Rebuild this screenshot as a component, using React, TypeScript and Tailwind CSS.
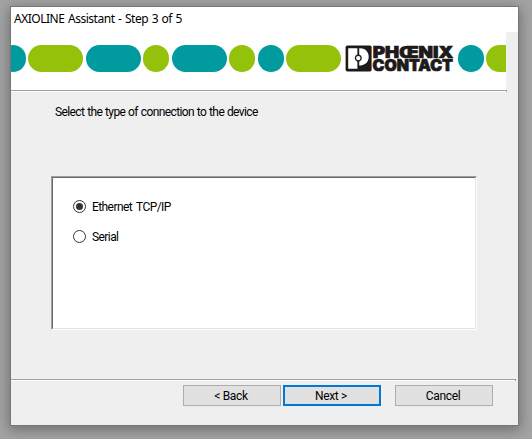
import type { ReactNode } from "react";

const body = "font-[Roboto,sans-serif] text-[12px] leading-[16px] text-black whitespace-nowrap";

function Pill({ wide = false, green = false }: { wide?: boolean; green?: boolean }) {
  return (
    <div
      className={`h-[26.4px] shrink-0 rounded-full ${wide ? "w-[55px]" : "w-[26.4px]"} ${
        green ? "bg-[#94c10a]" : "bg-[#009a9f]"
      }`}
    />
  );
}

function Logo() {
  return (
    <svg width="108" height="27" viewBox="0 0 108 27" className="ml-[1.8px] mr-[2px] shrink-0 overflow-visible">
      <rect x="0.6" y="0.5" width="26" height="26" rx="1.8" fill="#1d1a19" />
      <path d="M3.2 3.3H12.4V9.4A3.9 3.9 0 0 0 12.4 16.8V23.7H3.2Z" fill="#fff" />
      <path d="M14.2 3.3H15.2C26.6 3.3 26.6 20.4 15.2 20.4H14.2V16.8A3.9 3.9 0 0 0 14.2 9.4Z" fill="#fff" />
      <circle cx="13.3" cy="13.1" r="2.2" fill="#fff" />
      <g fill="#1d1a19" stroke="#1d1a19" strokeWidth="0.7" fontFamily="Inter, sans-serif" fontWeight="900" fontSize="15.4">
        <text x="27.8" y="12.5" textLength="80.4" lengthAdjust="spacingAndGlyphs">PHŒNIX</text>
        <text x="27.5" y="26.2" textLength="80.5" lengthAdjust="spacingAndGlyphs">CONTACT</text>
      </g>
    </svg>
  );
}

function Rule({ className }: { className: string }) {
  return <div className={`h-[2px] border-t border-r border-[#a0a0a0] bg-white ${className}`} />;
}

function Radio({ checked = false, label }: { checked?: boolean; label: string }) {
  return (
    <label className="flex h-[13px] items-center gap-[6px]">
      <span className="flex size-[13px] items-center justify-center rounded-full border border-[#333] bg-white">
        {checked && <span className="size-[7px] rounded-full bg-[#333]" />}
      </span>
      <span className={`${body} pt-px tracking-[-0.58px] [word-spacing:1.8px]`}>{label}</span>
    </label>
  );
}

function Button({ primary = false, className = "", children }: { primary?: boolean; className?: string; children: ReactNode }) {
  return (
    <button
      className={`flex h-[21px] w-[98px] items-center justify-center bg-[#e1e1e1] pr-[2px] ${
        primary ? "border-2 border-[#0078d7]" : "border border-[#adadad]"
      } ${body} tracking-[-0.35px] ${className}`}
    >
      {children}
    </button>
  );
}

export default function App() {
  return (
    <div className="h-[439px] w-[532px] overflow-hidden bg-[#a3a3a3] pt-[6px] pl-[10px]">
      <main className="h-[420px] w-[509px] border border-[#777] bg-[#efefef] shadow-[0_3px_12px_1px_rgba(0,0,0,0.32)]">
        <header className="h-[25px] bg-white pl-[3px] pt-[4px]">
          <h1 className="font-['Noto_Sans','Open_Sans',sans-serif] text-[12px] leading-[16px] tracking-[-0.48px] whitespace-nowrap text-black [word-spacing:0.9px]">
            AXIOLINE Assistant - Step 3 of 5
          </h1>
        </header>
        <div className="flex h-[58px] w-[495px] items-start gap-[2.3px] overflow-hidden bg-white pt-[13.2px]">
          <div className="-ml-[11.4px] flex shrink-0 gap-[2.3px]">
            <Pill />
            <Pill wide green />
            <Pill wide />
            <Pill green />
            <Pill wide />
            <Pill green />
            <Pill />
            <Pill wide green />
          </div>
          <Logo />
          <Pill />
          <Pill wide green />
        </div>
        <Rule className="w-[496px]" />
        <p className={`${body} mt-[12px] ml-[44px] tracking-[-0.6px] [word-spacing:0.4px]`}>Select the type of connection to the device</p>
        <section className="mt-[56px] ml-[40px] h-[154px] w-[426px] border border-t-[#a0a0a0] border-r-white border-b-white border-l-[#a0a0a0]">
          <div className="flex h-full flex-col gap-[17px] border border-t-[#696969] border-r-[#e3e3e3] border-b-[#e3e3e3] border-l-[#696969] bg-white pt-[22px] pl-[20px]">
            <Radio checked label="Ethernet TCP/IP" />
            <Radio label="Serial" />
          </div>
        </section>
        <Rule className="mt-[49px] w-[505px]" />
        <footer className="mt-[4px] ml-[172px] flex gap-[2px]">
          <Button>&lt; Back</Button>
          <Button primary>Next &gt;</Button>
          <Button className="ml-[12px]">Cancel</Button>
        </footer>
      </main>
    </div>
  );
}
